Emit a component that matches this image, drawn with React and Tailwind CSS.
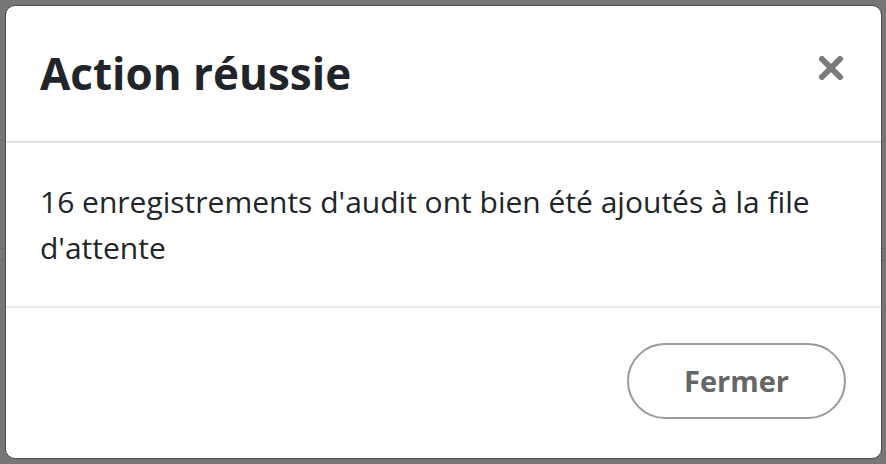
export default function App() {
  return (
    <div className="w-[886px] h-[464px] bg-[#767676] overflow-hidden relative" style={{ fontFamily: '"Open Sans", sans-serif' }}>
      <div className="absolute left-0 right-0 top-[248px] h-px bg-[#6a6a6a]" />
      <div className="absolute left-0 right-0 top-[260px] h-px bg-[#6a6a6a]" />
      <div className="absolute left-0 right-0 top-[140px] h-px bg-[#6a6a6a]" />
      <div className="absolute left-[5px] top-[5px] w-[877px] h-[454px] bg-white rounded-[10px] border border-[#4a4a4a] flex flex-col overflow-hidden">
        <div className="h-[137px] shrink-0 flex items-center justify-between pl-[34px] pr-[38px] border-b-2 border-[#dee2e6]">
          <h1 className="text-[44px] font-bold text-[#212529] leading-none -mt-[2px]">Action réussie</h1>
          <svg width="24" height="24" viewBox="0 0 24 24" className="-mt-[12px]">
            <path d="M3 3 L21 21 M21 3 L3 21" stroke="#7a7a7a" strokeWidth="6" strokeLinecap="round" />
          </svg>
        </div>
        <div className="h-[165px] shrink-0 px-[34px] pt-[36px] border-b-2 border-[#e9ecef]">
          <p className="text-[30px] leading-[46px] text-[#212529]">16 enregistrements d'audit ont bien été ajoutés à la file d'attente</p>
        </div>
        <div className="flex-1 flex items-start justify-end pr-[35px] pt-[35px]">
          <button className="w-[219px] h-[76px] rounded-full border-2 border-[#9a9a9a] text-[29px] font-bold text-[#666666]">Fermer</button>
        </div>
      </div>
    </div>
  );
}
